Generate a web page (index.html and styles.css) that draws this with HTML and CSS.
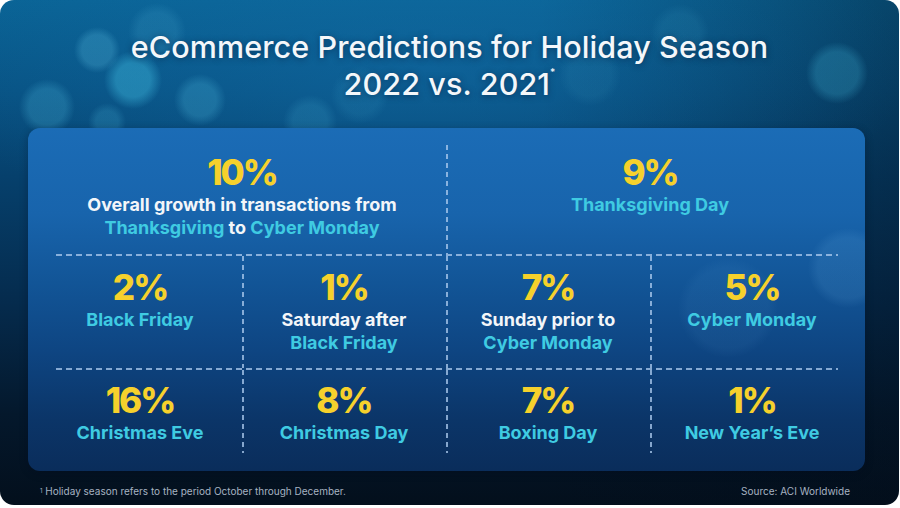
FILE: index.html
```html
<!DOCTYPE html>
<html lang="en">
<head>
<meta charset="utf-8">
<title>eCommerce Predictions for Holiday Season</title>
<link rel="stylesheet" href="styles.css">
</head>
<body>
<div class="card">
  <h1 class="title">eCommerce Predictions for Holiday Season<br>2022 vs. 2021<sup class="ast">*</sup></h1>
  <div class="panel">
    <div class="grid">
      <div class="cell wide">
        <div class="pct">10%</div>
        <div class="lbl white">Overall growth in transactions from</div>
        <div class="lbl"><span class="cyan">Thanksgiving</span> <span class="white">to</span> <span class="cyan">Cyber Monday</span></div>
      </div>
      <div class="cell wide vline">
        <div class="pct">9%</div>
        <div class="lbl cyan">Thanksgiving Day</div>
      </div>
      <div class="divider"></div>
      <div class="cell r2">
        <div class="pct">2%</div>
        <div class="lbl cyan">Black Friday</div>
      </div>
      <div class="cell r2 vline">
        <div class="pct">1%</div>
        <div class="lbl white">Saturday after</div>
        <div class="lbl cyan">Black Friday</div>
      </div>
      <div class="cell r2 vline">
        <div class="pct">7%</div>
        <div class="lbl white">Sunday prior to</div>
        <div class="lbl cyan">Cyber Monday</div>
      </div>
      <div class="cell r2 vline">
        <div class="pct">5%</div>
        <div class="lbl cyan">Cyber Monday</div>
      </div>
      <div class="divider"></div>
      <div class="cell r3">
        <div class="pct">16%</div>
        <div class="lbl cyan">Christmas Eve</div>
      </div>
      <div class="cell r3 vline">
        <div class="pct">8%</div>
        <div class="lbl cyan">Christmas Day</div>
      </div>
      <div class="cell r3 vline">
        <div class="pct">7%</div>
        <div class="lbl cyan">Boxing Day</div>
      </div>
      <div class="cell r3 vline">
        <div class="pct">1%</div>
        <div class="lbl cyan">New Year’s Eve</div>
      </div>
    </div>
  </div>
  <div class="footer">
    <span class="note"><sup>1</sup> Holiday season refers to the period October through December.</span>
    <span class="source">Source: ACI Worldwide</span>
  </div>
</div>
</body>
</html>
```

FILE: styles.css
```css
html, body {
  margin: 0;
  padding: 0;
  background: #ffffff;
}

body {
  width: 900px;
  height: 508px;
  overflow: hidden;
  font-family: Inter, "Noto Sans", sans-serif;
}

.card {
  width: 899px;
  height: 505px;
  border-radius: 14px;
  box-sizing: border-box;
  padding-top: 28px;
  overflow: hidden;
  background:
    radial-gradient(circle at 97px 50px, rgba(90, 190, 225, 0.28) 0 15px, rgba(90, 190, 225, 0) 23px),
    radial-gradient(circle at 157px 32px, rgba(90, 190, 225, 0.15) 0 19px, rgba(90, 190, 225, 0) 29px),
    radial-gradient(circle at 133px 80px, rgba(70, 200, 235, 0.38) 0 17px, rgba(70, 200, 235, 0) 29px),
    radial-gradient(circle at 200px 100px, rgba(80, 190, 225, 0.26) 0 16px, rgba(80, 190, 225, 0) 26px),
    radial-gradient(circle at 47px 107px, rgba(80, 190, 225, 0.25) 0 18px, rgba(80, 190, 225, 0) 28px),
    radial-gradient(circle at 107px 122px, rgba(80, 190, 225, 0.2) 0 11px, rgba(80, 190, 225, 0) 19px),
    radial-gradient(circle at 310px 122px, rgba(80, 190, 225, 0.16) 0 17px, rgba(80, 190, 225, 0) 27px),
    radial-gradient(circle at 360px 95px, rgba(80, 190, 225, 0.1) 0 19px, rgba(80, 190, 225, 0) 29px),
    radial-gradient(circle at 837px 73px, rgba(60, 170, 205, 0.3) 0 21px, rgba(60, 170, 205, 0) 31px),
    radial-gradient(circle at 680px 33px, rgba(70, 170, 205, 0.12) 0 19px, rgba(70, 170, 205, 0) 29px),
    radial-gradient(circle at 590px 75px, rgba(70, 170, 205, 0.1) 0 21px, rgba(70, 170, 205, 0) 31px),
    radial-gradient(ellipse 700px 260px at 420px 70px, rgba(20, 110, 170, 0.45), rgba(20, 110, 170, 0) 70%),
    linear-gradient(to right, rgba(0, 0, 0, 0) 60%, rgba(2, 12, 25, 0.35) 100%),
    linear-gradient(to bottom, #0a6496 0%, #085384 18%, #06406c 35%, #052b4d 60%, #04182c 82%, #030f1c 100%);
}

.title {
  margin: 0;
  text-align: center;
  color: #f4f7fa;
  font-family: Inter, "Noto Sans", sans-serif;
  font-weight: 500;
  font-size: 30.5px;
  line-height: 37px;
  letter-spacing: 0.1px;
  text-shadow: 0 1px 6px rgba(0, 20, 50, 0.5);
}

.ast {
  font-size: 10px;
  vertical-align: top;
  line-height: 1;
  position: relative;
  top: 2px;
}

.panel {
  margin: 26px 0 0 28px;
  width: 837px;
  height: 343px;
  box-sizing: border-box;
  padding: 17px 11px 0 10px;
  border-radius: 12px;
  background:
    radial-gradient(circle at 820px 140px, rgba(120, 190, 240, 0.12) 0 30px, rgba(120, 190, 240, 0) 40px),
    radial-gradient(circle at 700px 180px, rgba(120, 190, 240, 0.06) 0 40px, rgba(120, 190, 240, 0) 50px),
    linear-gradient(to bottom, #1b6cb6 0%, #1864ac 25%, #125597 45%, #0e4582 65%, #0b3568 85%, #0a2d5b 100%);
  box-shadow: 0 2px 8px rgba(0, 10, 30, 0.3);
}

.grid {
  display: grid;
  grid-template-columns: repeat(4, 204px);
  grid-template-rows: 109px 2px 112px 2px 85px;
}

.cell {
  display: flex;
  flex-direction: column;
  align-items: center;
  text-align: center;
}

.wide {
  grid-column: span 2;
  padding-top: 6px;
}

.r2 {
  padding-top: 10px;
}

.r3 {
  padding-top: 9px;
}

.vline {
  background-image: repeating-linear-gradient(to bottom, rgba(175, 205, 240, 0.75) 0 5px, rgba(0, 0, 0, 0) 5px 9px);
  background-size: 2px 100%;
  background-repeat: no-repeat;
  background-position: left top;
}

.r3.vline {
  background-size: 2px 83px;
}

.divider {
  grid-column: 1 / -1;
  margin: 0 16px 0 18px;
  background-image: repeating-linear-gradient(to right, rgba(175, 205, 240, 0.75) 0 6px, rgba(0, 0, 0, 0) 6px 10px);
}

.pct {
  color: #f6d12c;
  font-weight: 800;
  font-size: 35px;
  line-height: 42px;
  letter-spacing: -2px;
}

.lbl {
  font-weight: 700;
  font-size: 18px;
  line-height: 23px;
  letter-spacing: 0;
}

.white {
  color: #f3f6f9;
}

.cyan {
  color: #3fcbe2;
}

.footer {
  display: flex;
  justify-content: space-between;
  margin: 14px 49px 0 40px;
  font-size: 10px;
  line-height: 12px;
  color: #a7b3c2;
  letter-spacing: 0;
}

.footer sup {
  font-size: 6px;
  vertical-align: top;
}
```
